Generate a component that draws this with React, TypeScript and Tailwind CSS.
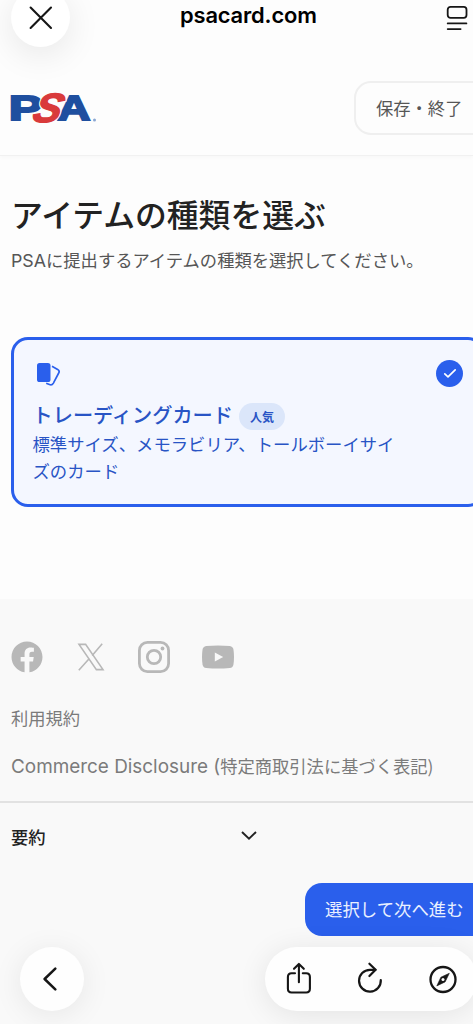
import type { ReactNode } from 'react';
import { FaFacebook } from 'react-icons/fa';

type LinkProps = {
    className?: string;
    children: ReactNode;
};

const PsaLogo = () => (
    <svg width="88" height="38" viewBox="0 0 88 38" className="block overflow-visible" fontFamily="Liberation Sans, sans-serif" fontWeight="700">
        <g fill="#1f4f9f" stroke="#1f4f9f" strokeWidth="2" fontSize="35.5">
            <text transform="translate(-1.2 31) scale(1.42 1)">P</text>
            <text transform="translate(47.4 31) scale(1.28 1)">A</text>
        </g>
        <g fontSize="41" fontStyle="italic" transform="translate(21 33.2) skewX(-16) scale(1.02 1)">
            <text stroke="#fdfdfd" strokeWidth="3.6" fill="#fdfdfd">S</text>
            <text fill="#d93a3b" stroke="#d93a3b" strokeWidth="1.4">S</text>
        </g>
        <circle cx="84.5" cy="31" r="1.5" fill="#8ba6d2" />
    </svg>
);

const TradingCardIcon = () => (
    <svg width="26" height="26" viewBox="0 0 26 26" className="block">
        <rect x="2" y="2" width="13.5" height="19" rx="2.6" fill="#2a5fec" />
        <path d="M17 5.3 L22.6 8.4 Q25 9.9 23.7 12 L18.4 22.1 Q16.9 24.7 14.4 23.5 L11.2 22.3" fill="none" stroke="#2a5fec" strokeWidth="1.7" />
    </svg>
);

const FooterLink = ({ className = '', children }: LinkProps) => (
    <a className={`block whitespace-nowrap text-[17.3px] leading-6 text-[#7b7b7b] ${className}`}>{children}</a>
);

function TopBar() {
    return (
        <div className="flex h-[60px] items-start">
            <button title="閉じる" className="-mt-3 ml-[11px] flex size-[59px] shrink-0 items-center justify-center rounded-full bg-white shadow-[0_8px_34px_rgba(0,0,0,0.09)]">
                <svg width="24" height="24" viewBox="0 0 24 24" fill="none" stroke="#161616" strokeWidth="2.1" strokeLinecap="round">
                    <path d="M1.6 1.6 L22 22 M22 1.6 L1.6 22" />
                </svg>
            </button>
            <span className="ml-[110px] font-[Inter,sans-serif] text-[21.9px] leading-[30px] font-semibold tracking-[-0.15px] text-black">psacard.com</span>
            <button title="ページメニュー" className="mt-[5px] mr-[5px] ml-auto">
                <svg width="22" height="26" viewBox="0 0 22 26" fill="none" stroke="#161616" strokeWidth="1.8" strokeLinecap="round">
                    <rect x="1.7" y="1.9" width="18.8" height="11" rx="2.8" />
                    <path d="M1.7 18.4 H20.4 M1.7 24.1 H14.6" />
                </svg>
            </button>
        </div>
    );
}

function SiteHeader() {
    return (
        <div className="flex h-24 items-start justify-between border-b border-[#f1f1f1] pl-2.5 shadow-[0_2px_4px_rgba(0,0,0,0.025)]">
            <div className="mt-[29px]"><PsaLogo /></div>
            <button className="mt-[21px] -mr-6 h-[54px] w-[143px] rounded-[17px] border-2 border-[#efefef] pl-5 text-left text-[17.3px] whitespace-nowrap text-[#565656]">保存・終了</button>
        </div>
    );
}

function ItemCard() {
    return (
        <div className="mt-[62px] h-[170px] w-[474px] rounded-[17px] border-3 border-[#2a5fec] bg-[#f4f7ff] pl-[18.5px] text-[#2854c5]">
            <div className="flex h-[62px] items-start justify-between">
                <div className="mt-[21px] ml-[2px]"><TradingCardIcon /></div>
                <div className="mt-5 mr-[19px] flex size-[27px] items-center justify-center rounded-full bg-[#2a5fec]">
                    <svg width="14" height="11" viewBox="0 0 14 11" fill="none" stroke="white" strokeWidth="1.7" strokeLinecap="round" strokeLinejoin="round">
                        <path d="M1.8 5.9 L5 8.9 L12.2 1.9" />
                    </svg>
                </div>
            </div>
            <div className="flex items-start">
                <h2 className="w-[206.5px] text-[20.2px] leading-[26px] font-medium whitespace-nowrap">トレーディングカード</h2>
                <span className="mt-px flex h-[27px] w-[46px] items-center justify-center rounded-full bg-[#dbe6fa] text-xs font-bold">人気</span>
            </div>
            <p className="mt-px text-[17.35px] leading-[26.5px]">標準サイズ、メモラビリア、トールボーイサイ<br />ズのカード</p>
        </div>
    );
}

function SocialLinks() {
    return (
        <div className="flex h-8 items-center text-[#b8b8b8]">
            <FaFacebook size={32} />
            <svg width="28" height="28" viewBox="0 0 28 28" fill="none" stroke="currentColor" strokeWidth="1.6" className="ml-[34px]">
                <path d="M2 1.4 H8.6 L26 26.6 H19.4 Z" />
                <path d="M25.2 .8 L15.2 12.4 M12.1 15.7 L1.8 27.2" />
            </svg>
            <svg width="32" height="32" viewBox="0 0 32 32" fill="none" stroke="currentColor" strokeWidth="2.8" className="ml-[33px]">
                <rect x="1.4" y="1.4" width="29.2" height="29.2" rx="8" />
                <circle cx="16" cy="16" r="6.7" />
                <circle cx="24.5" cy="7.5" r="1.9" fill="currentColor" stroke="none" />
            </svg>
            <svg width="32" height="24" viewBox="0 0 32 24" className="ml-8">
                <path d="M4.2 1 Q16 0 27.8 1 Q31 1.4 31.5 4.8 Q32.5 12 31.5 19.2 Q31 22.6 27.8 23 Q16 24 4.2 23 Q1 22.6 .5 19.2 Q-.5 12 .5 4.8 Q1 1.4 4.2 1 Z" fill="currentColor" />
                <path d="M12.8 7.4 L21.2 12 L12.8 16.6 Z" fill="#f9f9f9" />
            </svg>
        </div>
    );
}

function BottomBar() {
    return (
        <div className="mt-[11px] flex justify-between">
            <button title="戻る" className="ml-5 flex size-16 items-center justify-center rounded-full bg-[#fefefe] shadow-[0_4px_30px_rgba(0,0,0,0.08)]">
                <svg width="14" height="24" viewBox="0 0 14 24" fill="none" stroke="#161616" strokeWidth="2.5" strokeLinecap="round" strokeLinejoin="round" className="-ml-1">
                    <path d="M12.3 1.6 L1.6 12 L12.3 22.4" />
                </svg>
            </button>
            <div className="-mr-1 flex h-16 w-[212px] shrink-0 items-center rounded-full bg-[#fefefe] pl-[18px] shadow-[0_4px_30px_rgba(0,0,0,0.09)]">
                <svg width="32" height="36" viewBox="0 0 32 36" fill="none" stroke="#161616" strokeWidth="2.1" strokeLinecap="round" strokeLinejoin="round">
                    <path d="M12 12.2 H8.6 Q4.9 12.2 4.9 15.9 V27.8 Q4.9 31.5 8.6 31.5 H23.2 Q26.9 31.5 26.9 27.8 V15.9 Q26.9 12.2 23.2 12.2 H19.8" />
                    <path d="M15.9 21.3 V3.2 M11 7.8 L15.9 2.9 L20.8 7.8" />
                </svg>
                <svg width="32" height="36" viewBox="0 0 32 36" fill="none" stroke="#161616" strokeWidth="2.2" strokeLinecap="round" strokeLinejoin="round" className="ml-[39px]">
                    <path d="M21.5 8.8 H16 A10.9 10.9 0 1 0 26.8 19" />
                    <path d="M15.4 2.7 L21.6 8.8 L15.4 15" />
                </svg>
                <svg width="32" height="36" viewBox="0 0 32 36" fill="none" stroke="#161616" strokeWidth="2.3" className="ml-[41px]">
                    <g transform="translate(0 -1)">
                        <circle cx="16" cy="19.5" r="12.5" />
                        <path d="M22.3 13.3 L18.1 21.9 L9.8 25.9 L13.9 17.2 Z" fill="#161616" strokeWidth=".6" strokeLinejoin="round" />
                        <circle cx="16" cy="19.5" r="1.5" fill="#fefefe" stroke="none" />
                    </g>
                </svg>
            </div>
        </div>
    );
}

export default function App() {
    return (
        <div className="flex h-[1024px] w-[473px] flex-col overflow-hidden bg-[#fdfdfd] font-['Noto_Sans_CJK_JP',sans-serif]">
            <TopBar />
            <SiteHeader />
            <main className="h-[443px] shrink-0 pt-[35px] pl-[11px]">
                <h1 className="text-[31.8px] leading-[44px] font-medium whitespace-nowrap text-[#222]">アイテムの種類を選ぶ</h1>
                <p className="mt-[11px] mb-px text-[17.3px] leading-7 whitespace-nowrap text-[#565656]">
                    <span className="font-[Inter,sans-serif] text-[17.8px]">PSA</span>に提出するアイテムの種類を選択してください。
                </p>
                <ItemCard />
            </main>
            <footer className="flex-1 bg-[#f9f9f9]">
                <div className="h-[202px] pt-[42px] pl-[11px]">
                    <SocialLinks />
                    <FooterLink className="mt-[33px]">利用規約</FooterLink>
                    <FooterLink className="mt-6">
                        <span className="font-[Inter,sans-serif] text-[18.9px]">Commerce Disclosure (</span>特定商取引法に基づく表記)
                    </FooterLink>
                </div>
                <div className="flex h-[82px] items-start border-t-2 border-[#e2e2e2] pt-[22px] pl-[11px]">
                    <span className="w-[229px] text-[17.3px] leading-6 font-medium text-[#222]">要約</span>
                    <svg width="18" height="12" viewBox="0 0 18 12" fill="none" stroke="#222" strokeWidth="1.9" className="mt-[5px]">
                        <path d="M2 2 L9 8.8 L16 2" />
                    </svg>
                </div>
                <button className="ml-[305px] block h-[53px] w-[190px] rounded-[17px] bg-[#2a5fec] pl-5 text-left text-[17.4px] whitespace-nowrap text-[#eaf1ff]">選択して次へ進む</button>
                <BottomBar />
            </footer>
        </div>
    );
}
